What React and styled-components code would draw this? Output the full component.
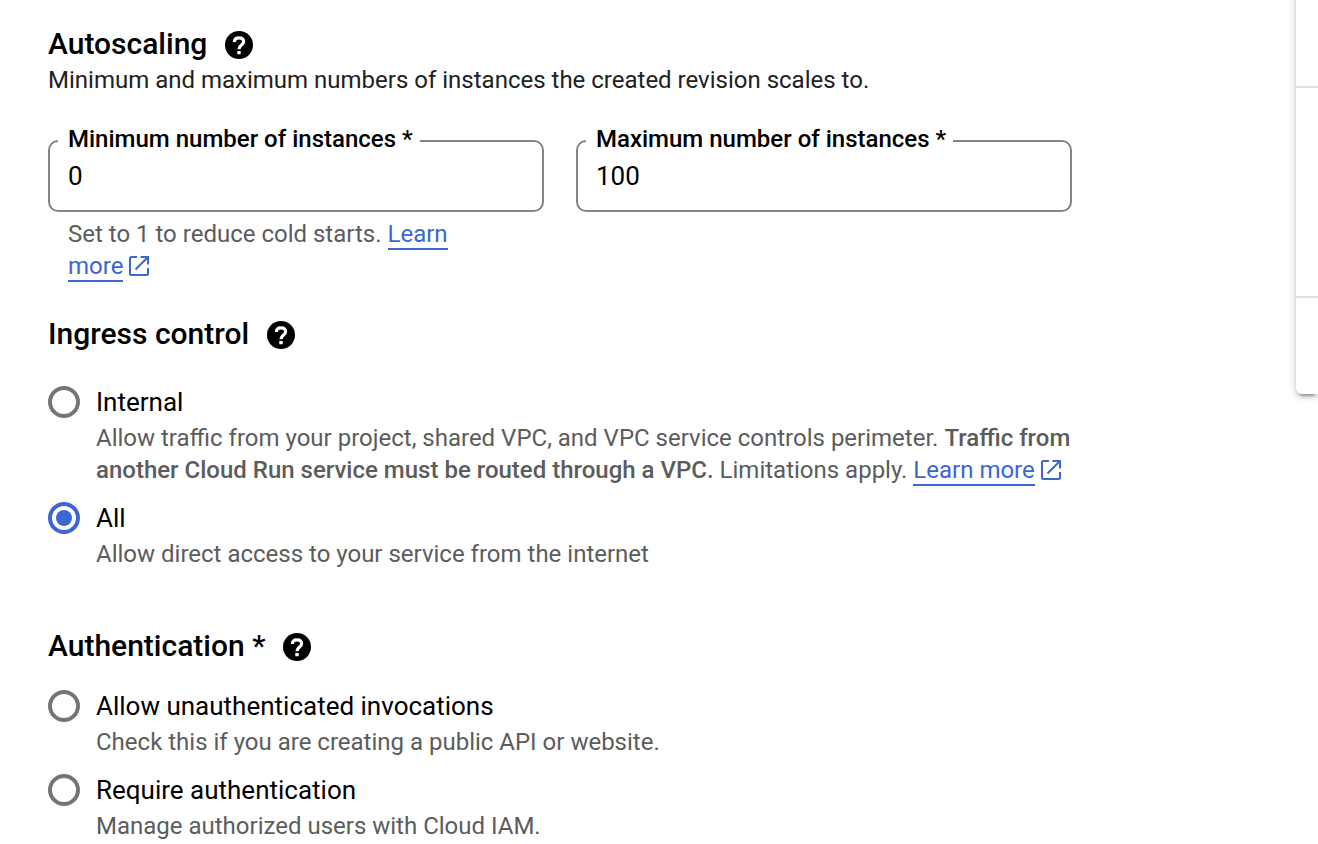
import React, { useState } from "react";
import styled, { createGlobalStyle } from "styled-components";

const GlobalStyle = createGlobalStyle`
  *, *::before, *::after { box-sizing: border-box; }
  body {
    margin: 0;
    background: #fff;
    color: #000;
    font-family: Roboto, "Liberation Sans", sans-serif;
    font-size: 24px;
    line-height: 32px;
  }
`;

const Page = styled.div`
  display: flex;
  align-items: flex-start;
`;

const Form = styled.form`
  flex: 1;
  min-width: 0;
  padding: 28px 48px 0;
`;

const Section = styled.section`
  max-width: 1024px;
  margin-bottom: ${({ $gap }) => $gap}px;
`;

const Heading = styled.div`
  display: flex;
  align-items: center;
  gap: 18px;
  margin-bottom: ${({ $gap }) => $gap}px;
`;

const Title = styled.h2`
  margin: 0;
  font-size: 30px;
  line-height: 32px;
  font-weight: 500;
`;

const HelpButton = styled.button`
  display: flex;
  margin: 2px 0 0;
  padding: 0;
  border: 0;
  background: none;
  color: inherit;
  cursor: pointer;
`;

const Intro = styled.p`
  margin: 0;
  color: #212121;
`;

const Fields = styled.div`
  display: grid;
  grid-template-columns: 1fr 1fr;
  align-items: start;
  gap: 32px;
  margin-top: 31px;
`;

const Outline = styled.fieldset`
  min-width: 0;
  margin: 0;
  padding: 0 18px 13px;
  border: 2px solid #80868b;
  border-radius: 10px;
`;

const Legend = styled.legend`
  margin-left: -10px;
  padding: 0 7px 4px 10px;
  line-height: 24px;
  font-weight: 500;
`;

const TextInput = styled.input`
  display: block;
  width: 100%;
  height: 42px;
  padding: 0;
  border: 0;
  outline: 0;
  background: transparent;
  color: #000;
  font: inherit;
  font-size: 26px;
`;

const Hint = styled.p`
  margin: 6px 0 0;
  padding: 0 20px;
  color: #5c5c5c;
`;

const Link = styled.a`
  color: #3c66d2;
  text-decoration: none;
`;

const LinkText = styled.span`
  display: inline-block;
  height: 32px;
  border-bottom: 2px solid;
  vertical-align: top;
`;

const NoWrap = styled.span`
  white-space: nowrap;
`;

const LinkIcon = styled.svg`
  margin-left: 6px;
  vertical-align: -2px;
`;

const Options = styled.div`
  display: flex;
  flex-direction: column;
  gap: 16px;
`;

const Option = styled.div`
  display: grid;
  grid-template-columns: 32px 1fr;
  column-gap: 16px;
  row-gap: 4px;
`;

const Radio = styled.input`
  appearance: none;
  width: 32px;
  height: 32px;
  margin: 0;
  padding: 4px;
  border: 4px solid #757575;
  border-radius: 50%;
  background-clip: content-box;
  cursor: pointer;

  &:checked {
    border-color: #3c66d2;
    background-color: #3c66d2;
  }
`;

const OptionLabel = styled.label`
  font-size: 26px;
`;

const OptionNote = styled.p`
  grid-column: 2;
  margin: 0;
  color: #5c5c5c;

  b { font-weight: 500; }
`;

const SidePanel = styled.aside`
  flex: 0 0 22px;
  margin-top: -8px;
  border-bottom-left-radius: 6px;
  background: #fff;
  box-shadow: 0 6px 2px -4px rgba(0, 0, 0, 0.2), 0 3px 4px rgba(0, 0, 0, 0.16), 0 2px 10px rgba(0, 0, 0, 0.14);
`;

const PanelRow = styled.div`
  height: ${({ $height }) => $height}px;
  border-bottom: ${({ $last }) => ($last ? "0" : "2px solid #e0e0e0")};
`;

function Help({ topic }) {
  return (
    <HelpButton type="button" aria-label={`Help: ${topic}`}>
      <svg width="28" height="28" viewBox="0 0 28 28" aria-hidden="true">
        <circle cx="14" cy="14" r="14" fill="currentColor" />
        <path
          d="M9.4 10.9C9.4 8.3 11.3 6.9 14 6.9s4.6 1.5 4.6 3.9c0 3.3-4.6 3.3-4.6 7.4"
          fill="none"
          stroke="#fff"
          strokeWidth="3.2"
        />
        <rect x="12.3" y="19.9" width="3.4" height="3.4" rx="0.6" fill="#fff" />
      </svg>
    </HelpButton>
  );
}

function SectionHeading({ children, gap }) {
  return (
    <Heading $gap={gap}>
      <Title>{children}</Title>
      <Help topic={children} />
    </Heading>
  );
}

function OpenIcon() {
  return (
    <LinkIcon
      width="20"
      height="20"
      viewBox="0 0 20 20"
      fill="none"
      stroke="currentColor"
      strokeWidth="2"
      aria-hidden="true"
    >
      <path d="M8 1H2.5A1.5 1.5 0 0 0 1 2.5v15A1.5 1.5 0 0 0 2.5 19h15a1.5 1.5 0 0 0 1.5-1.5V12" />
      <path d="M11.5 1H19v7.5M19 1 6.5 13.5" />
    </LinkIcon>
  );
}

function NumberField({ id, label, initial, children }) {
  const [value, setValue] = useState(initial);
  return (
    <div>
      <Outline>
        <Legend>
          <label htmlFor={id}>{label}</label>
        </Legend>
        <TextInput
          id={id}
          inputMode="numeric"
          required
          value={value}
          onChange={(e) => setValue(e.target.value)}
        />
      </Outline>
      {children}
    </div>
  );
}

function RadioOption({ id, name, label, checked, children }) {
  return (
    <Option>
      <Radio type="radio" id={id} name={name} defaultChecked={checked} aria-describedby={`${id}-note`} />
      <OptionLabel htmlFor={id}>{label}</OptionLabel>
      <OptionNote id={`${id}-note`}>{children}</OptionNote>
    </Option>
  );
}

export default function App() {
  return (
    <>
      <GlobalStyle />
      <Page>
        <Form>
          <Section $gap={36}>
            <SectionHeading gap={4}>Autoscaling</SectionHeading>
            <Intro>Minimum and maximum numbers of instances the created revision scales to.</Intro>
            <Fields>
              <NumberField id="min" label="Minimum number of instances *" initial="0">
                <Hint>
                  Set to 1 to reduce cold starts.{" "}
                  <Link href="#cold-starts">
                    <LinkText>Learn</LinkText>{" "}
                    <NoWrap>
                      <LinkText>more</LinkText>
                      <OpenIcon />
                    </NoWrap>
                  </Link>
                </Hint>
              </NumberField>
              <NumberField id="max" label="Maximum number of instances *" initial="100" />
            </Fields>
          </Section>

          <Section $gap={60}>
            <SectionHeading gap={36}>Ingress control</SectionHeading>
            <Options role="radiogroup" aria-label="Ingress control">
              <RadioOption id="internal" name="ingress" label="Internal">
                Allow traffic from your project, shared VPC, and VPC service controls perimeter.{" "}
                <b>Traffic from another Cloud Run service must be routed through a VPC.</b> Limitations apply.{" "}
                <Link href="#ingress">
                  <NoWrap>
                    <LinkText>Learn more</LinkText>
                    <OpenIcon />
                  </NoWrap>
                </Link>
              </RadioOption>
              <RadioOption id="all" name="ingress" label="All" checked>
                Allow direct access to your service from the internet
              </RadioOption>
            </Options>
          </Section>

          <Section $gap={0}>
            <SectionHeading gap={28}>Authentication *</SectionHeading>
            <Options role="radiogroup" aria-label="Authentication">
              <RadioOption id="public" name="auth" label="Allow unauthenticated invocations">
                Check this if you are creating a public API or website.
              </RadioOption>
              <RadioOption id="private" name="auth" label="Require authentication">
                Manage authorized users with Cloud IAM.
              </RadioOption>
            </Options>
          </Section>
        </Form>
        <SidePanel aria-label="Summary">
          <PanelRow $height={96} />
          <PanelRow $height={210} />
          <PanelRow $height={96} $last />
        </SidePanel>
      </Page>
    </>
  );
}
